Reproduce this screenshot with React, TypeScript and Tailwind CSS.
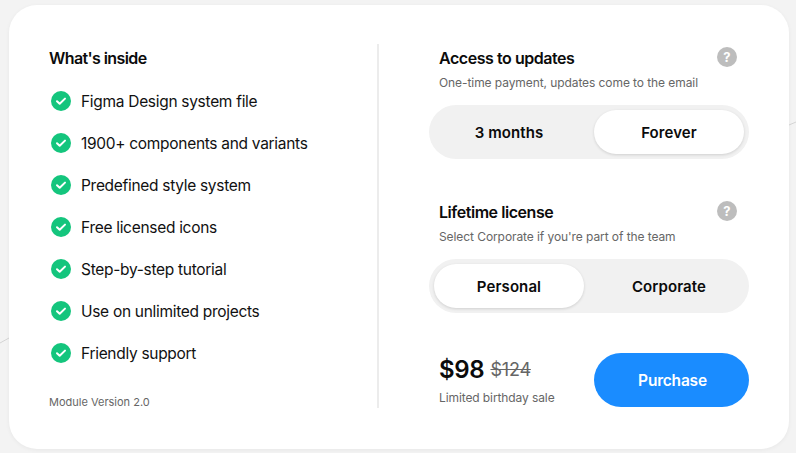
const features = [
  'Figma Design system file',
  '1900+ components and variants',
  'Predefined style system',
  'Free licensed icons',
  'Step-by-step tutorial',
  'Use on unlimited projects',
  'Friendly support',
]

function CheckIcon() {
  return (
    <svg width="20" height="20" viewBox="0 0 20 20" className="shrink-0">
      <circle cx="10" cy="10" r="10" fill="#14c57d" />
      <path d="M6 10.2l2.7 2.6L14 7.6" fill="none" stroke="#fff" strokeWidth="2" strokeLinecap="round" strokeLinejoin="round" />
    </svg>
  )
}

function OptionHeader({ title, subtitle }: { title: string; subtitle: string }) {
  return (
    <div className="flex justify-between pl-[10px] pr-[12px]">
      <div>
        <h3 className="text-[16px] leading-[24px] font-semibold text-[#0b0b0b] tracking-[-0.45px]">{title}</h3>
        <p className="mt-[4px] text-[12px] leading-[18px] text-[#666] tracking-[-0.08px]">{subtitle}</p>
      </div>
      <div className="mt-[1px] w-5 h-5 rounded-full bg-[#bdbdbd] flex items-center justify-center text-white text-[13px] font-bold leading-none">?</div>
    </div>
  )
}

function Toggle({ options, active }: { options: string[]; active: number }) {
  return (
    <div className="mt-[13px] h-[54px] rounded-full bg-[#f1f1f1] p-[5px] flex gap-[10px]">
      {options.map((option, i) => (
        <div
          key={option}
          className={
            i === active
              ? 'w-[150px] pt-[3px] rounded-full bg-white shadow-[0_1px_3px_rgba(0,0,0,0.14)] flex items-center justify-center text-[15px] font-semibold text-[#0b0b0b] tracking-[0.1px]'
              : 'w-[150px] pt-[3px] flex items-center justify-center text-[15px] font-semibold text-[#0b0b0b] tracking-[0.1px]'
          }
        >
          {option}
        </div>
      ))}
    </div>
  )
}

export default function App() {
  return (
    <div className="relative w-[796px] h-[453px] overflow-hidden bg-[#f3f3f3] pt-[5px] pl-[9px] font-['Inter',sans-serif]">
      {/* faint background lines */}
      <svg width="796" height="453" className="absolute inset-0">
        <path d="M0 343L9 338" stroke="#d4d4d4" strokeWidth="1" />
        <path d="M789 125L796 122" stroke="#d4d4d4" strokeWidth="1" />
      </svg>

      <div className="relative w-[780px] h-[444px] rounded-[28px] bg-white flex pt-[39px] shadow-[0_1px_4px_rgba(0,0,0,0.05)]">
        <div className="w-[370px] h-[364px] border-r-2 border-[#ececec] pl-[40px] flex flex-col">
          <h2 className="text-[16px] leading-[28px] font-semibold text-[#0b0b0b] tracking-[-0.6px]">What's inside</h2>
          <ul className="mt-[19px] flex flex-col gap-[22px]">
            {features.map((feature) => (
              <li key={feature} className="flex items-center h-5 pl-[2px] gap-[10px] text-[15.5px] text-[#111] tracking-[-0.3px]">
                <CheckIcon />
                <span className="pt-[2px]">{feature}</span>
              </li>
            ))}
          </ul>
          <p className="mt-auto mb-[-3px] text-[11px] leading-[18px] text-[#666]">Module Version 2.0</p>
        </div>

        <div className="ml-[50px] w-[320px] flex flex-col">
          <div className="pt-[2px]">
            <OptionHeader title="Access to updates" subtitle="One-time payment, updates come to the email" />
            <Toggle options={['3 months', 'Forever']} active={1} />
          </div>
          <div className="mt-[41px]">
            <OptionHeader title="Lifetime license" subtitle="Select Corporate if you're part of the team" />
            <Toggle options={['Personal', 'Corporate']} active={0} />
          </div>
          <div className="mt-[40px] flex items-center justify-between pl-[10px]">
            <div>
              <div className="flex items-center gap-[6px]">
                <span className="text-[24px] leading-[32px] font-semibold text-[#0b0b0b] tracking-[-0.3px]">$98</span>
                <span className="text-[18px] text-[#666] line-through tracking-[-0.2px]">$124</span>
              </div>
              <p className="mt-[3px] text-[12px] leading-[18px] text-[#666] tracking-[-0.1px]">Limited birthday sale</p>
            </div>
            <button className="w-[155px] h-[54px] rounded-full bg-[#1a8cff] pl-[2px] pt-[2px] text-white text-[15.5px] font-semibold tracking-[-0.2px]">Purchase</button>
          </div>
        </div>
      </div>
    </div>
  )
}
